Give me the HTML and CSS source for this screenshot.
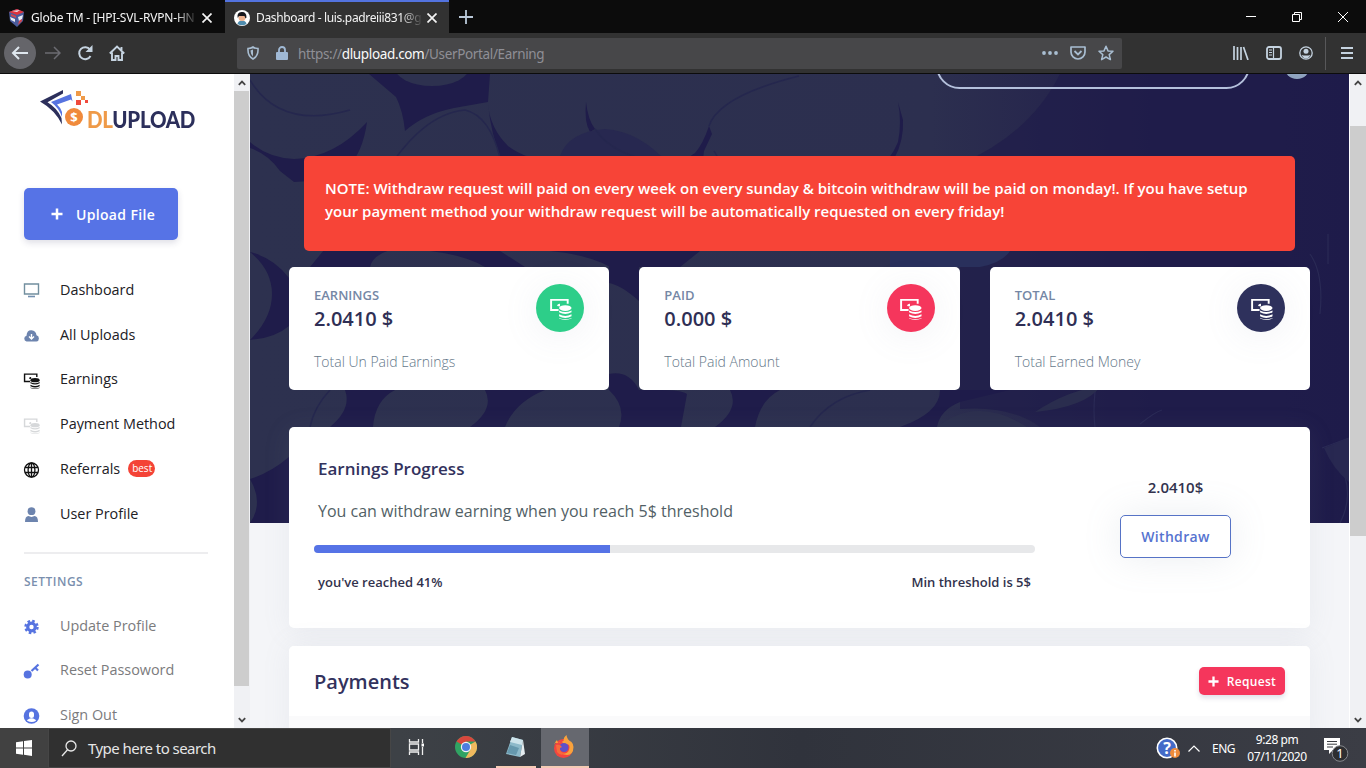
FILE: index.html
```
<!DOCTYPE html>
<html lang="en">

<head>
    <meta charset="UTF-8">
    <title>Dashboard</title>
    <link rel="stylesheet" href="styles.css">
</head>

<body>
    <!-- shared icons -->
    <svg class="defs" width="0" height="0">
        <symbol id="money" viewBox="0 0 24 24">
            <path d="M10 13.500H2.200V3H19.500V7" fill="none" stroke="currentColor" stroke-width="2" />
            <path d="M8.500 9.500a2.500 2.500 0 0 1 3-2.500v3z" fill="currentColor" />
            <ellipse cx="17" cy="11.500" rx="6.500" ry="3" fill="currentColor" />
            <path d="M10.500 14q6.500 3.500 13 0v2q-6.500 3.600-13 0zM10.500 18q6.500 3.500 13 0v2q-6.500 3.600-13 0zM10.500 21.800q6.500 3 13 0v.7q-6.500 3-13 0z" fill="currentColor" />
        </symbol>
        <symbol id="close" viewBox="0 0 10 10">
            <path d="M.5 .5l9 9M9.500 .5l-9 9" stroke="currentColor" stroke-width="1.700" fill="none" />
        </symbol>
        <symbol id="plus" viewBox="0 0 12 12">
            <path d="M6 .5v11M.5 6h11" stroke="currentColor" stroke-width="2.500" fill="none" />
        </symbol>
        <symbol id="arrow" viewBox="0 0 8 6">
            <path d="M.8 4.800L4 1.600l3.200 3.200" stroke="#444" stroke-width="1.800" fill="none" />
        </symbol>
    </svg>

    <!-- tabs -->
    <div class="tabbar">
        <div class="tab">
            <svg width="17" height="18" viewBox="0 0 17 18"><path d="M1 3l8-3 7 3-1 9-6 6-7-6z" fill="#4a5c9c" /><path d="M1 3l8-3 7 3-7 3z" fill="#e0343d" /><path d="M4 2l5 1 3-2M2 8l5 2v3l-4-2zM10 8l5-2-1 4-3 2z" fill="#e8ecf4" /><path d="M3 5l5 2v2L3 7zM11 12l3-2v2l-4 4z" fill="#d6444c" /></svg>
            <span class="tab-title tab-title-globe">Globe TM - [HPI-SVL-RVPN-HN</span>
            <svg class="tab-close" width="10" height="10"><use href="#close" /></svg>
        </div>
        <div class="tab active">
            <svg width="16" height="16" viewBox="0 0 16 16"><circle cx="8" cy="8" r="8" fill="#fff" /><path d="M3.500 14q.5-3.500 4.500-3.500t4.500 3.500q-4.500 2.500-9 0z" fill="#4f8cae" /><circle cx="8" cy="7.500" r="3.500" fill="#efb38f" /><path d="M3.700 8Q2.500 2.500 7.500 2t5 5.500l-1 1-1-2.500H5z" fill="#18181d" /></svg>
            <span class="tab-title tab-title-dash">Dashboard - luis.padreiii831@g</span>
            <svg class="tab-close" width="10" height="10"><use href="#close" /></svg>
        </div>
        <svg class="newtab" width="14" height="14" viewBox="0 0 14 14"><path d="M7 0v14M0 7h14" stroke="#b9c8d8" stroke-width="1.800" /></svg>
        <div class="winbtns">
            <svg width="10" height="10" viewBox="0 0 10 10"><path d="M0 4.500h10" stroke="#fff" /></svg>
            <svg width="10" height="10" viewBox="0 0 10 10"><path d="M.5 2.500h7v7h-7zM2.500 2.500v-2h7v7h-2" stroke="#fff" fill="none" /></svg>
            <svg width="10" height="10" viewBox="0 0 10 10"><path d="M0 0l10 10M10 0L0 10" stroke="#fff" fill="none" /></svg>
        </div>
    </div>

    <!-- toolbar -->
    <div class="toolbar">
        <div class="nav-btns">
            <div class="back"><svg width="18" height="14" viewBox="0 0 18 14"><path d="M17 7H2M8 1L2 7l6 6" stroke="#dfe7ee" stroke-width="2" fill="none" /></svg></div>
            <svg width="16" height="14" viewBox="0 0 16 14"><path d="M0 7h15M9 1l6 6-6 6" stroke="#6c6c72" stroke-width="1.500" fill="none" /></svg>
            <svg width="16" height="16" viewBox="0 0 16 16"><path d="M13 4.500A6 6 0 1 0 13.500 11" stroke="#c5d3e0" stroke-width="2" fill="none" /><path d="M15.500 0v7h-7z" fill="#c5d3e0" /></svg>
            <svg width="16" height="16" viewBox="0 0 16 16"><path d="M.8 8.500L8 1.500l7.200 7M3 7.500V15h3.500v-4h3v4H13V7.500M12.500 2v3" stroke="#c5d3e0" stroke-width="1.900" fill="none" /></svg>
        </div>
        <div class="urlbar">
            <svg width="12" height="14" viewBox="0 0 12 14"><path d="M1 2.500Q4 2.500 6 1q2 1.500 5 1.500Q11.500 10 6 13 .5 10 1 2.500z" stroke="#a9bed2" stroke-width="1.600" fill="none" /><path d="M6 3.500v7Q3.500 8.500 3.500 4.500z" fill="#a9bed2" /></svg>
            <svg class="lock" width="12" height="14" viewBox="0 0 12 14"><path d="M3 6V4a3 3 0 0 1 6 0v2" stroke="#a0b9d5" stroke-width="1.800" fill="none" /><rect y="6" width="12" height="8" rx="1" fill="#a0b9d5" /></svg>
            <span class="url">https://<b>dlupload.com</b>/UserPortal/Earning</span>
            <svg class="dots" width="16" height="4" viewBox="0 0 16 4"><circle cx="2" cy="2" r="1.900" fill="#a9bed2" /><circle cx="8" cy="2" r="1.900" fill="#a9bed2" /><circle cx="14" cy="2" r="1.900" fill="#a9bed2" /></svg>
            <svg width="16" height="14" viewBox="0 0 16 14"><path d="M1 1h14v5a7 7 0 0 1-14 0z" stroke="#a9bed2" stroke-width="1.700" fill="none" stroke-linejoin="round" /><path d="M4.500 5L8 8.500 11.500 5" stroke="#a9bed2" stroke-width="1.800" fill="none" /></svg>
            <svg width="16" height="16" viewBox="0 0 16 16"><path d="M8 1.200l2 4.700 5 .4-3.800 3.300 1.200 5L8 12l-4.400 2.600 1.200-5L1 6.300l5-.4z" stroke="#a9bed2" stroke-width="1.500" fill="none" stroke-linejoin="round" /></svg>
        </div>
        <div class="tools">
            <svg width="16" height="14" viewBox="0 0 16 14"><path d="M1 0v14M4.500 1v13M8 1v13M10.500 1l4.500 13" stroke="#c5d3e0" stroke-width="1.700" fill="none" /></svg>
            <svg width="16" height="14" viewBox="0 0 16 14"><rect x="1" y="1" width="14" height="12" rx="2" stroke="#c5d3e0" stroke-width="1.800" fill="none" /><path d="M7.500 1v12M3 4h3M3 6.500h3M3 9h3" stroke="#c5d3e0" stroke-width="1.200" /></svg>
            <svg width="14" height="14" viewBox="0 0 14 14"><circle cx="7" cy="7" r="6.200" stroke="#c5d3e0" stroke-width="1.300" fill="none" /><circle cx="7" cy="5.300" r="2.500" fill="#c5d3e0" /><path d="M2.500 9q4.500 1 9 0-2 3.500-4.500 3.500T2.500 9z" fill="#c5d3e0" /></svg>
            <div class="sep"></div>
            <svg width="12" height="12" viewBox="0 0 12 12"><path d="M0 1h12M0 6h12M0 11h12" stroke="#c5d3e0" stroke-width="2" /></svg>
        </div>
    </div>

    <div class="page">
        <!-- left menu -->
        <div class="sidebar">
            <div class="logo">
                <svg width="49" height="40" viewBox="0 0 49 40">
                    <path d="M23 1L0 12.500Q15 21 22 35.500L21.500 29Q17 19 7.500 13.300L23 4.500z" fill="#2c2f5b" />
                    <path d="M31 5L11 13Q19 19 22 28v-5q-1-4-5-7.500l14-5 1.500 2z" fill="#5673e0" />
                    <circle cx="34" cy="28" r="9" fill="#f08a3c" />
                    <rect x="36" y="2" width="5" height="5" fill="#ef9a48" /><rect x="41" y="7" width="4" height="4" fill="#ef9a48" /><rect x="36" y="11" width="5" height="5" fill="#f04a3c" /><rect x="45" y="11" width="3" height="3" fill="#f04a3c" />
                    <text x="34" y="33" text-anchor="middle" class="coin-sign">$</text>
                </svg>
                <span class="logo-text"><i>DL</i>UPLOAD</span>
            </div>
            <a class="upload"><svg width="12" height="12"><use href="#plus" /></svg>Upload File</a>
            <ul class="menu">
                <li><svg width="16" height="15" viewBox="0 0 16 15"><path d="M1 1h14v10H1z" stroke="#728f9f" stroke-width="1.400" fill="none" /><path d="M4.500 13.500h7" stroke="#728fb0" stroke-width="1.600" /></svg>Dashboard</li>
                <li><svg width="16" height="12" viewBox="0 0 16 12"><path d="M3 11.500a3 3 0 0 1 0-5.800Q3.500 0 8 .3t5 5a3.200 3.200 0 0 1 0 6.200z" fill="#6d84ae" /><path d="M8 4v4M5.500 6.500L8 9l2.500-2.500" stroke="#fff" stroke-width="1.400" fill="none" /></svg>All Uploads</li>
                <li class="black"><svg width="17" height="17"><use href="#money" /></svg>Earnings</li>
                <li><svg class="faded" width="17" height="17"><use href="#money" /></svg>Payment Method</li>
                <li><svg width="16" height="16" viewBox="0 0 16 16"><g stroke="#111" stroke-width="1.300" fill="none"><circle cx="8" cy="8" r="7" /><ellipse cx="8" cy="8" rx="3.400" ry="7" /><path d="M8 1v14M1.500 5.500h13M1.500 10.500h13" /></g></svg>Referrals<span class="best">best</span></li>
                <li><svg width="16" height="16" viewBox="0 0 16 16"><circle cx="8" cy="4.200" r="3.900" fill="#6d84ae" /><path d="M1.500 15q0-6 3.500-6l3 1 3-1q3.500 0 3.500 6z" fill="#6d84ae" /></svg>User Profile</li>
            </ul>
            <h6>SETTINGS</h6>
            <ul class="menu settings">
                <li><svg width="16" height="16" viewBox="0 0 16 16"><circle cx="8" cy="8" r="3.800" stroke="#5673e0" stroke-width="3.200" fill="none" /><circle cx="8" cy="8" r="6" stroke="#5673e0" stroke-width="2.400" stroke-dasharray="2.500 2.212" fill="none" /></svg>Update Profile</li>
                <li><svg width="16" height="16" viewBox="0 0 16 16"><circle cx="4.200" cy="11.500" r="4" fill="#5673e0" /><path d="M8 8L15 1.500M11.500 4.500l3 3" stroke="#5673e0" stroke-width="2.200" fill="none" /></svg>Reset Passoword</li>
                <li><svg width="16" height="16" viewBox="0 0 16 16"><circle cx="8" cy="8" r="7.800" fill="#5673e0" /><rect x="5.500" y="3.500" width="5" height="6.500" rx="2.500" fill="#fff" /><path d="M3.500 12.800q.5-2 4.500-2.500 4 .5 4.500 2.500-4 2.500-9 0z" fill="#fff" /></svg>Sign Out</li>
            </ul>
        </div>
        <div class="scroll scroll-left">
            <svg width="8" height="6"><use href="#arrow" /></svg>
            <div class="thumb"></div>
            <svg class="down" width="8" height="6"><use href="#arrow" /></svg>
        </div>

        <div class="main">
            <!-- coins behind the cards -->
            <svg class="hero" width="1099" height="449" viewBox="0 0 1099 449">
                <defs>
                    <linearGradient id="fade">
                        <stop offset="0" stop-color="#2d314f" />
                        <stop offset=".62" stop-color="#2c2f4f" />
                        <stop offset=".82" stop-color="#221f4b" />
                        <stop offset="1" stop-color="#1f1c4a" />
                    </linearGradient>
                </defs>
                <rect width="1099" height="449" fill="url(#fade)" />
                <!-- gaps between the coins -->
                <g fill="#1f1c4a">
                    <path d="M119 0h121l-2 28-34 6q-30 6-49 23-2-20-9-34z" />
                    <path d="M0 68q18 16 44 17 40-1 73-37-4 30-20 47-20 12-53 13l-14-11Q18 80 0 74z" />
                    <path d="M238 30q2 24 20 42 18 14 51 17l-11 12-13-9q-15-7-34-8-10-24-13-54z" />
                    <path d="M336 28q2 18 9 27l-5 3q-6-10-4-30z" />
                    <path d="M459 52q-6 18-14 27-12 9-26 11l8 18h30q-6-15-3-31l8-17z" />
                    <path d="M648 28q4 20 0 40-8 20-24 29-22 11-54 11h45q22-8 29-23 10-18 9-39z" />
                    <path d="M0 178q24 6 39 26v48q-14 12-39 14 22-22 22-46T0 178z" />
                    <path d="M0 405q20-6 39-22v66H0q14-20 0-44z" />
                    <path d="M74 176h66q-18 6-20 17H60zM180 177h70l25 16h-40q-20-12-55-16zM300 177h150l-20 16h-70q-20-12-60-16z" />
                    <path d="M359 177h30v50q-18-16-30-18zM359 300q20-4 30 16h22q20 0 26 4l-6 33h-62q8-20-10-37z" />
                    <path d="M95 316h50q-20 10-22 37H80q22-18 15-37zM235 316h60q-30 12-40 37h-35q25-18 15-37z" />
                    <path d="M480 316h50q-20 10-25 37h-40q25-18 15-37zM690 316h70l-50 12q-20 8-23 25h-37q40-14 40-37z" />
                    <path d="M710 90q70-30 100-90h289v449h-239V353h-70q-30-22-80-18V177z" opacity=".65" />
                </g>
                <g fill="#2d314f">
                    <ellipse cx="182" cy="-8" rx="38" ry="20" />
                    <path d="M687 353q40-32 90 0z" opacity=".8" />
                    <path d="M785 338q35-23 65-25-15 20-65 25z" opacity=".8" />
                    <path d="M640 177h120q-8 12-30 16h-90z" fill="#29305c" />
                </g>
                <path d="M310 82q8-24 45-27 34 2 64 35l2 20H305z" fill="#272850" />
                <g fill="none" stroke="#25274e" stroke-width="1.500">
                    <path d="M130 108Q170 40 215 36q25 6 35 48M0 6q30 50 100 30M252 92q40 0 60 16M345 55q20 30 75 34M459 52q10-30 90-50M464 77q10 20 45 31M60 353q4-20 20-37M560 353q20-30 60-37" />
                </g>
                <g fill="none" stroke="#2a2a55" stroke-width="1.200">
                    <path d="M845 318q-2 20 0 35M890 350q15-12 22-14M1072 374l27-10M1090 390q15 30 0 59M1060 180q14 20 10 60M1078 160v30" />
                </g>
                <path d="M1074 374l25-10v44q-16-13-25-34z" fill="#282851" />
            </svg>

            <div class="content">
                <div class="topline">
                    <div class="search-pill"></div>
                    <div class="avatar"></div>
                </div>
                <div class="note">NOTE: Withdraw request will paid on every week on every sunday &amp; bitcoin withdraw will be paid on monday!. If you have setup<br>your payment method your withdraw request will be automatically requested on every friday!</div>
                <div class="stats">
                    <div class="card stat">
                        <div>
                            <h5>EARNINGS</h5>
                            <strong>2.0410 $</strong>
                            <p>Total Un Paid Earnings</p>
                        </div>
                        <div class="round green"><svg width="23" height="23"><use href="#money" /></svg></div>
                    </div>
                    <div class="card stat">
                        <div>
                            <h5>PAID</h5>
                            <strong>0.000 $</strong>
                            <p>Total Paid Amount</p>
                        </div>
                        <div class="round red"><svg width="23" height="23"><use href="#money" /></svg></div>
                    </div>
                    <div class="card stat">
                        <div>
                            <h5>TOTAL</h5>
                            <strong>2.0410 $</strong>
                            <p>Total Earned Money</p>
                        </div>
                        <div class="round navy"><svg width="23" height="23"><use href="#money" /></svg></div>
                    </div>
                </div>

                <div class="card progress-card">
                    <div class="progress-left">
                        <h3>Earnings Progress</h3>
                        <p class="lead">You can withdraw earning when you reach 5$ threshold</p>
                        <div class="bar"><div class="fill" style="width: 41%"></div></div>
                        <div class="bar-labels"><span class="reached">you've reached 41%</span><span class="minimum">Min threshold is 5$</span></div>
                    </div>
                    <div class="progress-right">
                        <span class="amount">2.0410$</span>
                        <a class="withdraw">Withdraw</a>
                    </div>
                </div>

                <div class="card payments">
                    <div class="payments-head">
                        <h2>Payments</h2>
                        <a class="request"><svg width="11" height="11"><use href="#plus" /></svg>Request</a>
                    </div>
                </div>
            </div>
        </div>
        <div class="scroll scroll-right">
            <svg width="8" height="6"><use href="#arrow" /></svg>
            <div class="thumb"></div>
            <svg class="down" width="8" height="6"><use href="#arrow" /></svg>
        </div>
    </div>

    <!-- windows taskbar -->
    <div class="taskbar">
        <div class="start"><svg width="16" height="16" viewBox="0 0 16 16"><path d="M0 2.300L7 1.300V7.500H0zM8 1.100L16 0V7.500H8zM0 8.500h7v6.200l-7-1zM8 8.500h8V16l-8-1.200z" fill="#fff" /></svg></div>
        <div class="search">
            <svg width="16" height="17" viewBox="0 0 16 17"><circle cx="10" cy="6" r="5" stroke="#e8e8e8" stroke-width="1.300" fill="none" /><path d="M6.500 9.800L1 16" stroke="#e8e8e8" stroke-width="1.300" /></svg>
            <span>Type here to search</span>
        </div>
        <div class="app"><svg width="17" height="16" viewBox="0 0 17 16"><path d="M1.500 0v3h9V0M1.500 16v-3h9v3M1.500 5h9v6h-9zM14.500 0v4M14.500 8v8" stroke="#eee" stroke-width="1.300" fill="none" /><path d="M13.500 4.500h2.500v3h-2.500z" fill="#fff" /></svg></div>
        <div class="app"><svg width="22" height="22" viewBox="0 0 22 22"><circle cx="11" cy="11" r="11" fill="#30a363" /><path d="M11 11L1.500 5.500A11 11 0 0 1 20.500 5.500H11z" fill="#d9473d" /><path d="M11 11l9.500-5.500A11 11 0 0 1 10.500 22l5-8.500z" fill="#f0b95e" /><circle cx="11" cy="11" r="5.200" fill="#f2f2f2" /><circle cx="11" cy="11" r="4" fill="#4d7de0" /></svg></div>
        <div class="app running notepad"><svg width="20" height="22" viewBox="0 0 20 22"><path d="M7 1l11 3-3 17-14-3z" fill="#8db9c9" /><path d="M7 1l11 3-1 5L5 6z" fill="#cde3ea" /><path d="M18 4l2 14-5 3z" fill="#e5edf0" /><path d="M5 9l9 3-3 7-9-2z" fill="#6698ad" /></svg></div>
        <div class="app running active-app"><svg width="22" height="24" viewBox="0 0 22 24"><circle cx="10.500" cy="13.500" r="9.500" fill="#f4453e" /><path d="M1.500 12Q1 8 4 5l1 3 4-1 3 3q6-2 4 5-2 5-9 3Q20 24 20.500 12q0-3-2-5Q14 5 13.500 0q-3 2-3 6l-4 2-5 0z" fill="#f9a23c" /><circle cx="11" cy="12.500" r="4.500" fill="#6050c8" /><path d="M3 10q4-1 6 2l-2 1q-1 5 6 5-5 4-9-1z" fill="#f76b3b" /></svg></div>
        <div class="tray">
            <svg width="24" height="22" viewBox="0 0 24 22"><circle cx="11" cy="11" r="9.700" fill="#446bc8" stroke="#fff" stroke-width="1.600" /><text x="11" y="17" text-anchor="middle" class="help-sign">?</text><circle cx="19" cy="16" r="5" fill="#ee8b3b" /><path d="M19 13v1.500M19 15.500v4" stroke="#fff" stroke-width="1.600" /></svg>
            <svg width="12" height="7" viewBox="0 0 12 7"><path d="M.5 6.500L6 1l5.500 5.500" stroke="#fff" stroke-width="1.200" fill="none" /></svg>
            <span class="lang">ENG</span>
            <div class="clock"><span class="time">9:28 pm</span><span class="date">07/11/2020</span></div>
            <svg class="notice" width="25" height="25" viewBox="0 0 25 25"><path d="M0 1h16v12H9l-4 4v-4H0z" fill="#fff" /><path d="M3 4.500h10M3 7.200h10M3 10h6" stroke="#3b3d42" /><circle cx="16" cy="16.500" r="7.800" fill="#2d2e31" stroke="#85878c" /><text x="16" y="21" text-anchor="middle" class="count">1</text></svg>
        </div>
    </div>
</body>

</html>
```
FILE: styles.css
```
* {
    margin: 0;
    padding: 0;
    box-sizing: border-box;
}

body {
    width: 1366px;
    height: 768px;
    overflow: hidden;
    display: flex;
    flex-direction: column;
    font-family: "Open Sans", sans-serif;
    background: #fff;
}

svg {
    flex: none;
    display: block;
}

.defs {
    position: absolute;
}

/* tabs */
.tabbar {
    height: 33px;
    flex: none;
    display: flex;
    align-items: center;
    background: #0c0c0c;
    color: #f4f4f4;
    font-family: "Noto Sans", sans-serif;
}

.tab {
    width: 225px;
    height: 33px;
    display: flex;
    align-items: center;
    padding: 2px 13px 0 8px;
    font-size: 12px;
}

.tab.active {
    width: 224px;
    background: #323232;
    border-top: 2px solid #5373df;
    padding: 0 12px 0 9px;
}

.tab-title {
    width: 165px;
    margin-left: 6px;
    overflow: hidden;
    white-space: nowrap;
    -webkit-mask-image: linear-gradient(to right, #000 145px, transparent 167px);
    mask-image: linear-gradient(to right, #000 145px, transparent 167px);
}

.tab-title-globe {
    letter-spacing: -0.2px;
}

.tab-title-dash {
    letter-spacing: -0.35px;
}

.tab-close {
    margin-left: auto;
}

.newtab {
    margin-left: 10px;
}

.winbtns {
    margin-left: auto;
    display: flex;
    gap: 36px;
    padding-right: 18px;
}

/* toolbar */
.toolbar {
    height: 41px;
    flex: none;
    display: flex;
    align-items: center;
    background: #323232;
    border-bottom: 1px solid #0c0c0c;
}

.nav-btns {
    width: 237px;
    display: flex;
    align-items: center;
    gap: 16px;
    padding-left: 4px;
}

.back {
    width: 32px;
    height: 32px;
    margin-right: -7px;
    border-radius: 50%;
    background: #65656a;
    display: flex;
    align-items: center;
    justify-content: center;
}

.urlbar {
    width: 885px;
    height: 31px;
    display: flex;
    align-items: center;
    gap: 12px;
    padding: 0 8px 0 10px;
    border-radius: 2px;
    background: #474749;
}

.lock {
    margin-left: 5px;
}

.url {
    margin-left: -2px;
    padding-top: 1px;
    font-family: "Noto Sans", sans-serif;
    font-size: 13.500px;
    letter-spacing: -0.35px;
    color: #8f8f96;
}

.url b {
    font-weight: 400;
    color: #fafafa;
}

.dots {
    margin-left: auto;
}

.tools {
    flex: 1;
    display: flex;
    align-items: center;
    justify-content: flex-end;
    gap: 17px;
    padding-right: 13px;
}

.sep {
    width: 1px;
    height: 33px;
    margin: 0 -2px 0 -5px;
    background: #58585a;
}

/* page */
.page {
    height: 654px;
    flex: none;
    display: flex;
    overflow: hidden;
}

.sidebar {
    width: 234px;
    height: 654px;
    padding: 15px 26px 0 24px;
    overflow: hidden;
}

.logo {
    height: 40px;
    display: flex;
    padding-left: 16px;
}

.logo-text {
    padding-top: 13px;
    margin-left: -2px;
    font-family: Lato, sans-serif;
    font-weight: 900;
    font-size: 23px;
    line-height: 34px;
    letter-spacing: -0.3px;
    color: #2c2f5b;
    transform: scaleX(0.89);
    transform-origin: left;
}

.logo-text i {
    font-style: normal;
    color: #ef9a48;
}

.coin-sign {
    font: 700 13px "Open Sans", sans-serif;
    fill: #fff;
}

.upload {
    width: 154px;
    height: 52px;
    margin-top: 59px;
    display: flex;
    align-items: center;
    justify-content: center;
    gap: 13px;
    padding-left: 4px;
    border-radius: 5px;
    background: #5673e6;
    color: #fff;
    font-size: 14px;
    font-weight: 600;
    letter-spacing: 0.35px;
    box-shadow: 0 3px 6px rgba(50, 50, 93, 0.15);
}

.menu {
    list-style: none;
    margin-top: 27px;
}

.menu li {
    height: 44.8px;
    display: flex;
    align-items: center;
    font-size: 14.4px;
    color: #212025;
    white-space: nowrap;
}

.menu li svg {
    width: 17px;
    margin-right: 20px;
    margin-left: -1px;
    margin-top: 3px;
}

.menu .black svg {
    color: #111;
}

.menu .faded {
    color: #d6d8da;
}

.best {
    height: 17px;
    margin-left: 8px;
    padding: 0 3px 0 4px;
    border-radius: 9px;
    background: #f44336;
    color: #fff;
    font-size: 10px;
    line-height: 16px;
}

.sidebar h6 {
    width: 184px;
    margin-top: 16px;
    padding-top: 19px;
    border-top: 2px solid #ededef;
    font-size: 12px;
    line-height: 18px;
    font-weight: 600;
    letter-spacing: 0.5px;
    color: #7a8fae;
}

.menu.settings {
    margin-top: 12px;
}

.settings li {
    color: #7b7b7d;
}

/* scrollbars */
.scroll {
    width: 16px;
    flex: none;
    display: flex;
    flex-direction: column;
    align-items: center;
    padding: 6px 0 5px;
    background: #f0f1f4;
}

.scroll .thumb {
    width: 16px;
    background: #cdcdcd;
}

.scroll-left .thumb {
    width: 15px;
    height: 595px;
    margin-top: 5px;
    margin-right: 1px;
}

.scroll-right {
    width: 17px;
    border-left: 1px solid #fff;
}

.scroll-right .thumb {
    height: 410px;
    margin-top: 40px;
}

.down {
    margin-top: auto;
    transform: rotate(180deg);
}

/* hero and content share one cell */
.main {
    width: 1099px;
    height: 654px;
    display: grid;
    overflow: hidden;
    background: #f4f5f8;
}

.hero,
.content {
    grid-area: 1 / 1;
}

.content {
    z-index: 1;
    padding: 0 39px;
}

.topline {
    height: 82px;
    display: flex;
    justify-content: flex-end;
    align-items: flex-start;
    gap: 34px;
}

.search-pill {
    width: 314px;
    height: 47px;
    margin-top: -32px;
    border: 2px solid #b4c0dc;
    border-radius: 24px;
}

.avatar {
    width: 26px;
    height: 26px;
    margin-top: -21px;
    border-radius: 50%;
    background: #8fa3bf;
}

.note {
    height: 95px;
    margin: 0 15px 16px;
    padding: 21px;
    border-radius: 5px;
    background: #f74437;
    color: #fff;
    font-size: 15px;
    font-weight: 600;
    line-height: 23px;
    white-space: nowrap;
}

.card {
    background: #fff;
    border-radius: 5px;
}

.stats {
    display: grid;
    grid-template-columns: repeat(3, 1fr);
    gap: 30px;
}

.stat {
    height: 123px;
    display: flex;
    justify-content: space-between;
    padding: 17px 25px 0;
}

.stat h5 {
    margin-top: 1px;
    font-size: 13px;
    font-weight: 600;
    line-height: 20px;
    color: #7587a5;
}

.stat strong {
    display: block;
    font-size: 20px;
    font-weight: 600;
    line-height: 28px;
    color: #2f2f55;
}

.stat p {
    margin-top: 18px;
    font-size: 14px;
    font-weight: 300;
    line-height: 22px;
    color: #647789;
}

.round {
    width: 48px;
    height: 48px;
    border-radius: 50%;
    display: flex;
    align-items: center;
    justify-content: center;
    color: #fff;
    box-shadow: 0 4px 36px rgba(136, 152, 170, 0.12);
}

.green {
    background: #2dce89;
}

.red {
    background: #f5365c;
}

.navy {
    background: #2e315c;
}

.progress-card {
    height: 201px;
    margin-top: 37px;
    display: flex;
    padding: 30px 25px 0;
    box-shadow: 0 4px 28px rgba(136, 152, 170, 0.1);
}

.progress-left {
    width: 721px;
}

.progress-left h3 {
    padding-left: 4px;
    font-size: 17px;
    font-weight: 600;
    line-height: 24px;
    color: #32325d;
}

.lead {
    margin-top: 17px;
    padding-left: 4px;
    font-size: 16px;
    line-height: 26px;
    color: #525f66;
}

.bar {
    height: 8px;
    margin-top: 21px;
    border-radius: 4px;
    overflow: hidden;
    background: #e7e8ea;
}

.fill {
    height: 8px;
    background: #5673e6;
}

.bar-labels {
    display: flex;
    justify-content: space-between;
    padding: 19px 4px 0;
    font-size: 13px;
    font-weight: 600;
    line-height: 20px;
    color: #32324d;
}

.progress-right {
    width: 111px;
    margin-left: 85px;
    display: flex;
    flex-direction: column;
    align-items: center;
    padding-top: 20px;
}

.amount {
    font-size: 15px;
    font-weight: 600;
    line-height: 21px;
    color: #32324d;
}

.withdraw {
    width: 111px;
    height: 43px;
    margin-top: 17px;
    border: 1px solid #5673c6;
    border-radius: 5px;
    color: #5673d0;
    font-size: 14px;
    font-weight: 600;
    line-height: 41px;
    text-align: center;
    letter-spacing: 0.35px;
    box-shadow: 0 0 36px rgba(136, 152, 170, 0.17);
}

.payments {
    height: 100px;
    margin-top: 18px;
    background: #fafafb;
    box-shadow: 0 0 28px rgba(136, 152, 170, 0.1);
}

.payments-head {
    height: 70px;
    display: flex;
    justify-content: space-between;
    align-items: center;
    padding: 0 25px;
    border-radius: 5px 5px 0 0;
    background: #fff;
}

.payments h2 {
    font-size: 20px;
    font-weight: 600;
    color: #32325d;
}

.request {
    width: 86px;
    height: 28px;
    display: flex;
    align-items: center;
    justify-content: center;
    gap: 8px;
    border-radius: 5px;
    background: #f5365c;
    color: #fff;
    font-size: 12px;
    font-weight: 600;
    letter-spacing: 0.3px;
    box-shadow: 0 3px 5px rgba(50, 50, 93, 0.15);
}

/* taskbar */
.taskbar {
    height: 40px;
    flex: none;
    display: flex;
    background: linear-gradient(to right, #414141 49px, #3d4146 400px, #30333c 800px, #3b3d45);
    color: #fff;
    font-family: "Noto Sans", sans-serif;
}

.start {
    width: 48px;
    display: flex;
    align-items: center;
    justify-content: center;
}

.search {
    width: 343px;
    display: flex;
    align-items: center;
    gap: 11px;
    padding-left: 12px;
    border: 1px solid #464646;
    background: #303030;
    font-size: 15px;
    letter-spacing: -0.55px;
    color: #e6e6e6;
}

.app {
    width: 50px;
    display: flex;
    align-items: center;
    justify-content: center;
    border-bottom: 2px solid transparent;
}

.app.running {
    border-color: #f5cbb5;
}

.app.notepad {
    width: 40px;
    margin: 0 5px;
    padding-right: 2px;
}

.app.active-app {
    width: 48px;
    padding-right: 2px;
    background: #66686f;
}

.tray {
    margin-left: auto;
    display: flex;
    align-items: center;
    padding-right: 17px;
    font-size: 12px;
}

.help-sign {
    font: 700 16px "Open Sans", sans-serif;
    fill: #fff;
}

.tray .lang {
    margin: 0 13px 0 12px;
    letter-spacing: -0.5px;
}

.tray svg + svg {
    margin-left: 8px;
}

.clock {
    width: 58px;
    display: flex;
    flex-direction: column;
    align-items: center;
    line-height: 17px;
    letter-spacing: -0.45px;
    white-space: nowrap;
}

.notice {
    margin-left: 18px;
    margin-top: 3px;
}

.count {
    font: 13px "Noto Sans", sans-serif;
    fill: #fff;
}
```
